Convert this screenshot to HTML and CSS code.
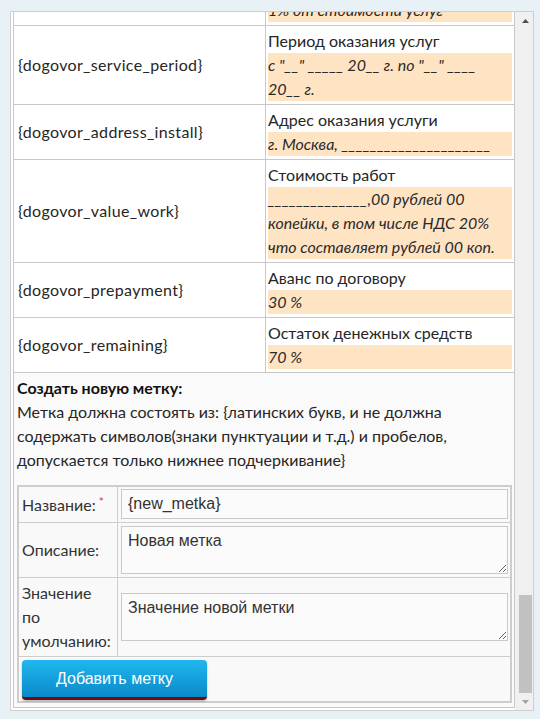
FILE: index.html
```html
<!DOCTYPE html>
<html lang="ru">
<head>
<meta charset="utf-8">
<title>Метки договора</title>
<link rel="stylesheet" href="styles.css">
</head>
<body>
<div class="frame">
  <div class="viewport">
    <div class="grid">
      <div class="key">{dogovor_penalty}</div>
      <div class="val"><div class="lbl">Размер неустойки</div><div class="def">1% от стоимости услуг</div></div>

      <div class="key">{dogovor_service_period}</div>
      <div class="val"><div class="lbl">Период оказания услуг</div><div class="def">с "__" _____ 20__ г. по "__" ____<br>20__ г.</div></div>

      <div class="key">{dogovor_address_install}</div>
      <div class="val"><div class="lbl">Адрес оказания услуги</div><div class="def">г. Москва, _____________________</div></div>

      <div class="key">{dogovor_value_work}</div>
      <div class="val"><div class="lbl">Стоимость работ</div><div class="def">______________,00 рублей 00<br>копейки, в том числе НДС 20%<br>что составляет рублей 00 коп.</div></div>

      <div class="key">{dogovor_prepayment}</div>
      <div class="val"><div class="lbl">Аванс по договору</div><div class="def">30 %</div></div>

      <div class="key">{dogovor_remaining}</div>
      <div class="val"><div class="lbl">Остаток денежных средств</div><div class="def">70 %</div></div>

      <div class="section">
        <div class="title">Создать новую метку:</div>
        <div class="note">Метка должна состоять из: {латинских букв, и не должна<br>содержать символов(знаки пунктуации и т.д.) и пробелов,<br>допускается только нижнее подчеркивание}</div>
        <div class="form">
          <div class="fgrid">
            <div class="flabel">Название:<span class="req">*</span></div>
            <div class="ffield first"><input class="inp" type="text" value="{new_metka}"></div>

            <div class="flabel">Описание:</div>
            <div class="ffield"><textarea class="ta">Новая метка</textarea></div>

            <div class="flabel tall">Значение<br>по<br>умолчанию:</div>
            <div class="ffield"><textarea class="ta">Значение новой метки</textarea></div>

            <div class="factions"><button class="btn" type="button">Добавить метку</button></div>
          </div>
        </div>
      </div>
    </div>
  </div>
  <div class="scrollbar">
    <div class="sb-btn"><svg width="7" height="4" viewBox="0 0 7 4"><polygon points="0,4 7,4 3.5,0" fill="#505050"/></svg></div>
    <div class="sb-track"><div class="thumb"></div></div>
    <div class="sb-btn"><svg width="7" height="4" viewBox="0 0 7 4"><polygon points="0,0 7,0 3.5,4" fill="#a3a3a3"/></svg></div>
  </div>
</div>
</body>
</html>
```
FILE: styles.css
```css
html, body {
  margin: 0;
  padding: 0;
  background: #e8f1f6;
}
body {
  font-family: Lato, "Open Sans", sans-serif;
  font-size: 16px;
  color: #262626;
}
.frame {
  display: flex;
  width: 524px;
  height: 700px;
  box-sizing: border-box;
  margin: 11px 0 0 10px;
  border: 1px solid #cfcfcf;
  background: #fff;
}
.viewport {
  flex: none;
  width: 504px;
  box-sizing: border-box;
  padding: 0 0 2px 2px;
  overflow: hidden;
  display: flex;
  flex-direction: column;
  justify-content: flex-end;
}
.grid {
  flex: none;
  display: grid;
  grid-template-columns: 251px 248px;
  gap: 1px;
  padding: 1px;
  background: #c8c8c8;
  width: 500px;
  line-height: 24px;
}
.key {
  background: #fff;
  padding: 0 4px;
  display: flex;
  align-items: center;
  letter-spacing: 0.35px;
}
.val {
  background: #fff;
  padding: 3px 2px;
}
.def {
  background: #ffe4c4;
  font-style: italic;
  white-space: nowrap;
  color: #2a2a2a;
}
.section {
  grid-column: 1 / -1;
  background: #fafafa;
  padding: 3px 2px 4px 3px;
}
.title {
  font-weight: 700;
  color: #111;
}
.note {
  margin-bottom: 13px;
  white-space: nowrap;
}
.form {
  border: 1px solid #cdcdcd;
}
.fgrid {
  display: grid;
  grid-template-columns: 98px 392px;
  gap: 1px;
  padding: 1px;
  background: #cdcdcd;
}
.flabel {
  background: #f9f9f9;
  padding: 0 3px;
  display: flex;
  align-items: center;
  color: #333;
}
.flabel.tall {
  padding: 3px;
}
.req {
  color: #e53030;
  font-size: 12px;
  align-self: flex-start;
  margin-top: 9px;
  margin-left: 3px;
  line-height: 12px;
}
.ffield {
  background: #f9f9f9;
  padding: 3px 2px 3px 3px;
  display: flex;
  align-items: center;
}
.ffield.first {
  padding-top: 2px;
}
.inp, .ta {
  box-sizing: border-box;
  width: 100%;
  margin: 0;
  border: 1px solid #c9c9c9;
  background: #fbfbfb;
  font-family: "Liberation Sans", Arial, sans-serif;
  font-size: 16px;
  color: #333;
  outline: none;
}
.inp {
  height: 30px;
  padding: 0 6px;
}
.ta {
  display: block;
  height: 48px;
  padding: 5px 6px;
  line-height: 18px;
  resize: vertical;
}
.factions {
  grid-column: 1 / -1;
  background: #f9f9f9;
  padding: 3px 3px 1px;
}
.btn {
  display: block;
  width: 185px;
  height: 40px;
  border: 0;
  border-bottom: 3px solid #6e0b0b;
  border-radius: 4px;
  background: linear-gradient(#21b7ee, #0a89c9);
  box-shadow: 0 1px 2px rgba(0, 0, 0, 0.3);
  color: #fff;
  font-family: "Liberation Sans", Arial, sans-serif;
  font-size: 16px;
  padding: 0;
}
.scrollbar {
  flex: none;
  width: 18px;
  background: #f0f0f0;
  display: flex;
  flex-direction: column;
}
.sb-btn {
  height: 17px;
  display: flex;
  align-items: center;
  justify-content: center;
  padding-left: 2px;
}
.sb-btn svg {
  display: block;
}
.sb-track {
  flex: 1;
  display: flex;
  flex-direction: column;
  justify-content: flex-end;
}
.thumb {
  height: 98px;
  margin: 0 1px 0 4px;
  background: #c1c1c1;
}
```
